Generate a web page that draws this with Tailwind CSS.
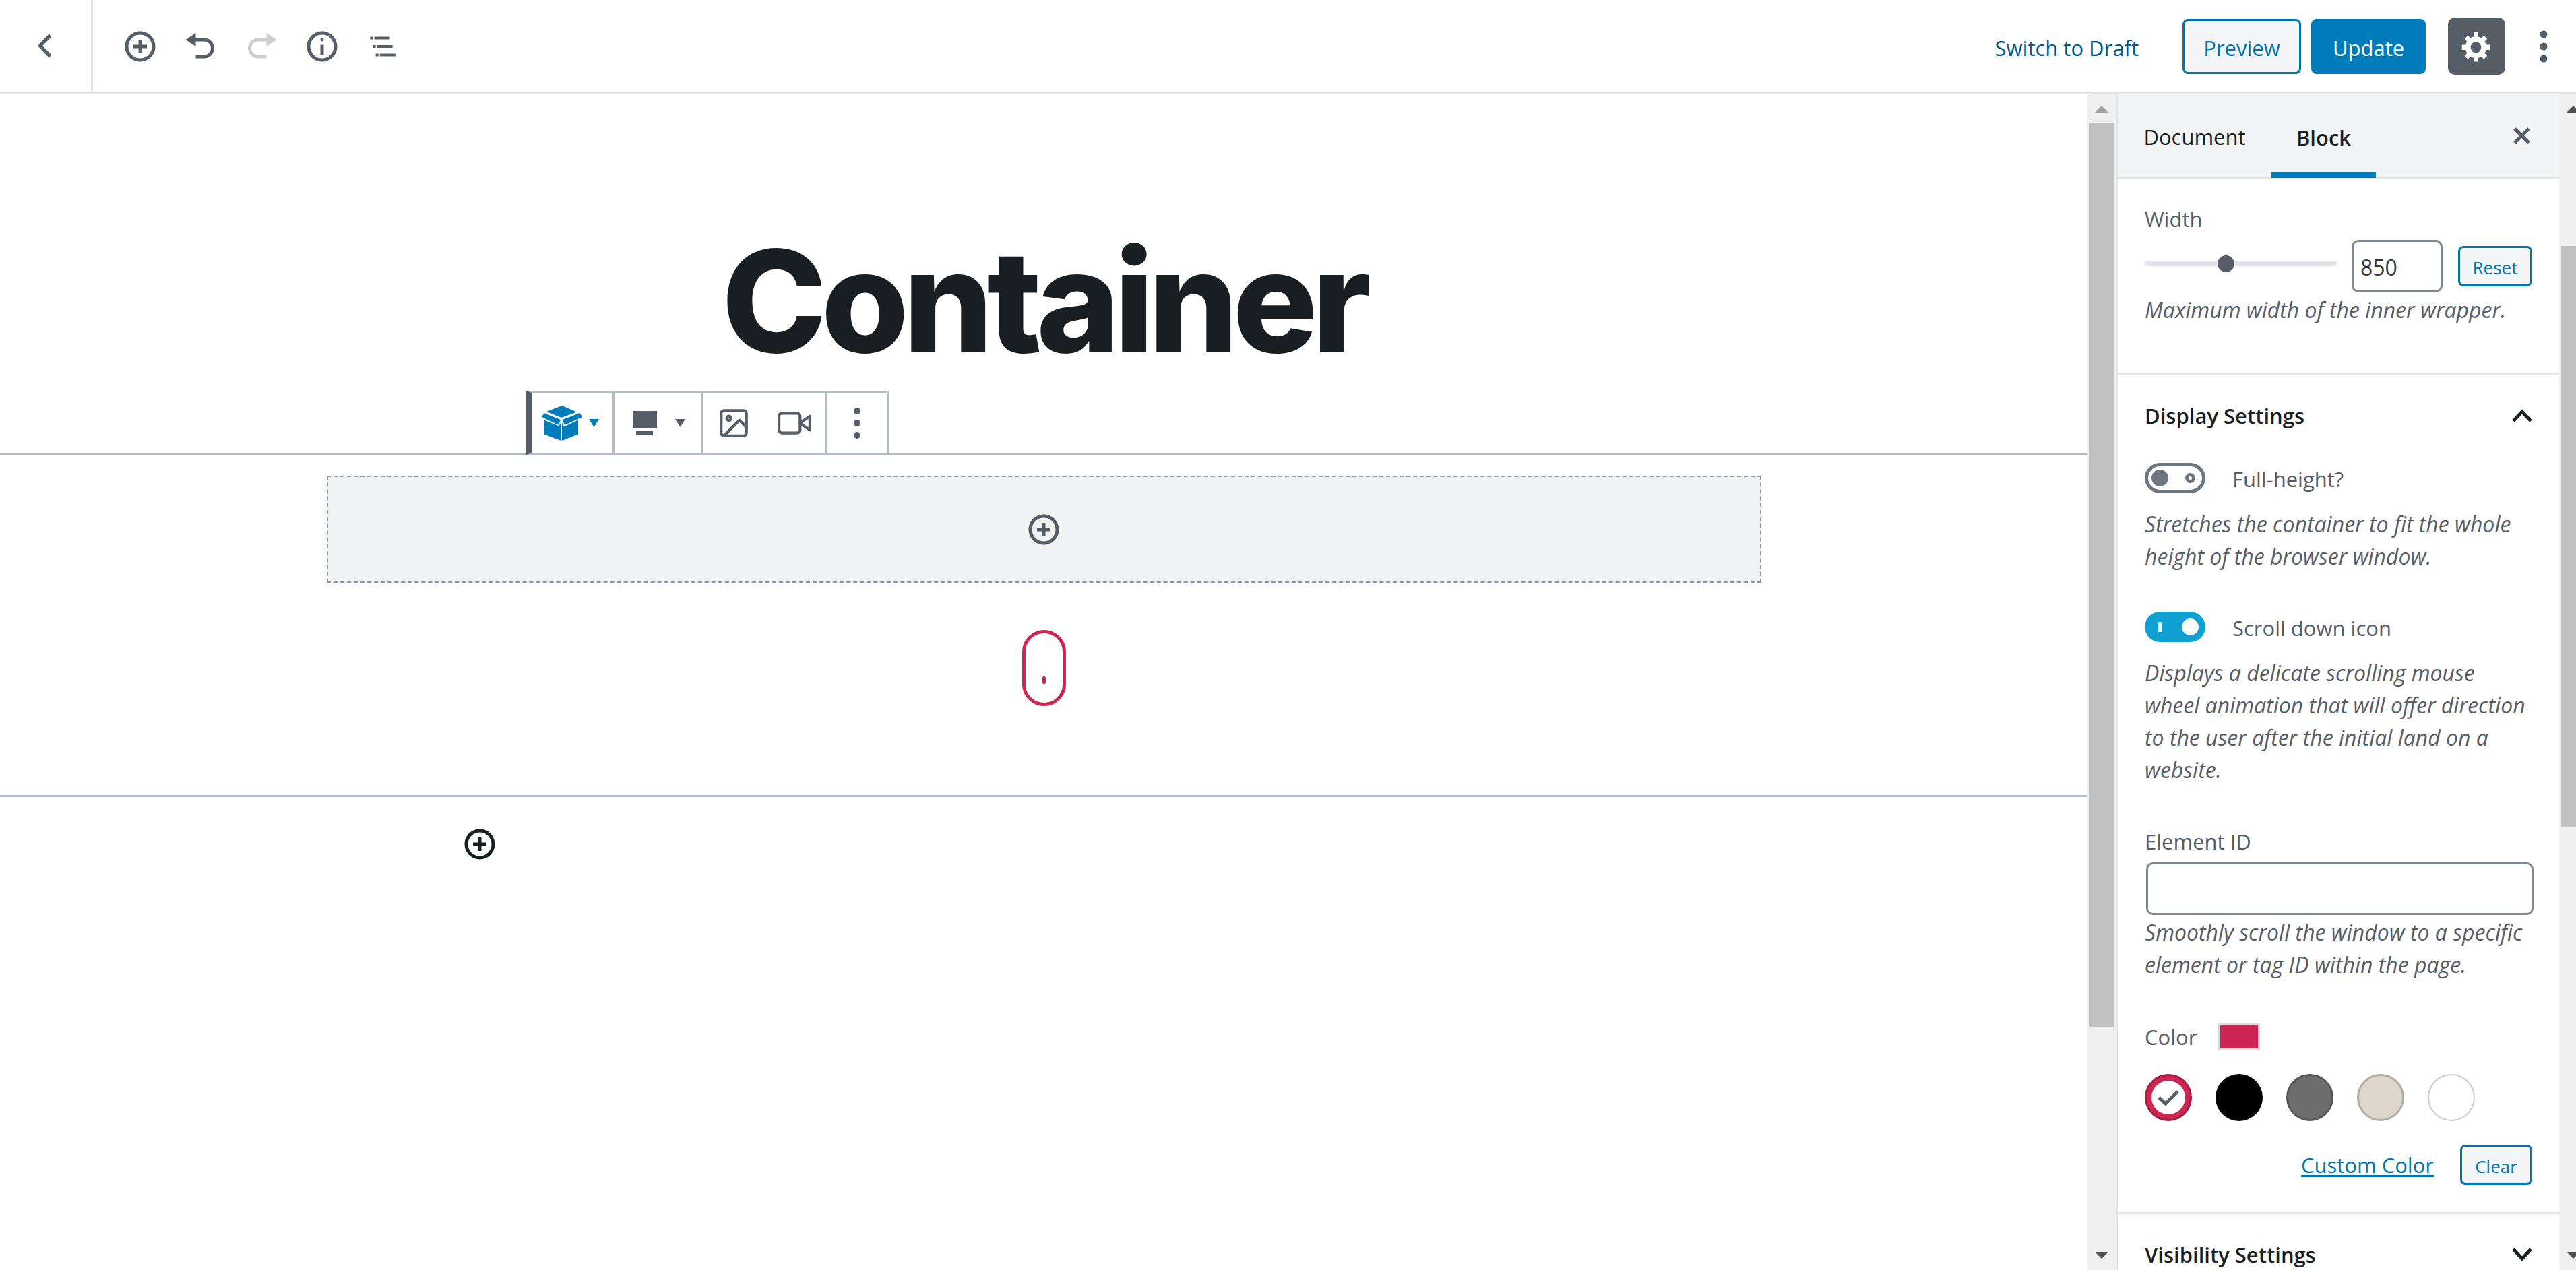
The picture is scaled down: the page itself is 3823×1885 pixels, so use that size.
<!DOCTYPE html>
<html lang="en">
<head>
<meta charset="utf-8">
<title>Edit Page</title>
<script src="https://cdn.jsdelivr.net/npm/@tailwindcss/browser@4"></script>
</head>
<body class="flex h-screen flex-col overflow-hidden bg-white font-['Open_Sans','Noto_Sans',sans-serif] text-[31px] leading-[48px] text-[#555d66]">

<header class="flex h-[140px] shrink-0 items-stretch justify-between border-b-3 border-[#e2e4e7]">
  <div class="flex">
    <a href="#" aria-label="Back" class="mb-[2px] flex w-[138px] items-center justify-center border-r-3 border-[#e2e4e7] pr-1 text-[#555d66]">
      <svg class="h-[36px] w-[20px]" viewBox="0 0 20 36" fill="currentColor"><path d="M17 0 20 5 7 18 20 31 17 36 0 18Z"/></svg>
    </a>
    <div class="flex items-center gap-10 pl-[45px]">
      <button type="button" aria-label="Add block"><svg class="size-[50px]" viewBox="0 0 20 20" fill="currentColor"><path d="M10 1c-5 0-9 4-9 9s4 9 9 9 9-4 9-9-4-9-9-9zm0 16c-3.900 0-7-3.100-7-7s3.100-7 7-7 7 3.100 7 7-3.100 7-7 7zm1-11H9v3H6v2h3v3h2v-3h3V9h-3V6z"/></svg></button>
      <button type="button" aria-label="Undo"><svg class="size-[50px]" viewBox="0 0 20 20" fill="currentColor"><path d="M12 5H7V2L1 6l6 4V7h5c2.200 0 4 1.800 4 4s-1.800 4-4 4H7v2h5c3.300 0 6-2.700 6-6s-2.700-6-6-6z"/></svg></button>
      <button type="button" aria-label="Redo" disabled class="text-[#ccced1]"><svg class="size-[50px]" viewBox="0 0 20 20" fill="currentColor"><path d="M8 5h5V2l6 4-6 4V7H8c-2.200 0-4 1.800-4 4s1.800 4 4 4h5v2H8c-3.300 0-6-2.700-6-6s2.700-6 6-6z"/></svg></button>
      <button type="button" aria-label="Content structure"><svg class="size-[50px]" viewBox="0 0 20 20" fill="currentColor"><path d="M9 15h2V9H9v6zm1-10c-.5 0-1 .5-1 1s.5 1 1 1 1-.5 1-1-.5-1-1-1zm0-4c-5 0-9 4-9 9s4 9 9 9 9-4 9-9-4-9-9-9zm0 16c-3.900 0-7-3.100-7-7s3.100-7 7-7 7 3.100 7 7-3.100 7-7 7z"/></svg></button>
      <button type="button" aria-label="Block navigation"><svg class="size-[50px]" viewBox="0 0 24 24" fill="currentColor"><path d="M5 5H3v2h2V5zm3 8h11v-2H8v2zm9-8H6v2h11V5zM7 11H5v2h2v-2zm0 8h2v-2H7v2zm3-2v2h11v-2H10z"/></svg></button>
    </div>
  </div>
  <div class="flex items-center pr-[23px]">
    <button type="button" class="mr-[65px] pt-1 text-[#00588a]">Switch to Draft</button>
    <button type="button" class="mr-[15px] h-[82px] w-[176px] rounded-[8px] border-3 border-[#0075af] bg-[#f3f5f6] pt-1 text-[#0075af]">Preview</button>
    <button type="button" class="mr-[33px] h-[82px] w-[170px] rounded-[8px] bg-[#007cba] pt-1 text-white">Update</button>
    <button type="button" aria-label="Settings" class="mr-[32px] flex size-[85px] items-center justify-center rounded-[10px] bg-[#555d66] pr-[2px] text-white"><svg class="size-[50px]" viewBox="0 0 20 20" fill="currentColor"><path d="M18 12h-2.200c-.2.700-.4 1.400-.8 2l1.500 1.500-2 2L13 16c-.6.400-1.300.600-2 .8V19H8.500v-2.200c-.7-.2-1.400-.4-2-.8L5 17.500l-2-2L4.500 14c-.4-.6-.6-1.300-.8-2H1.500V9h2.200c.2-.7.4-1.400.8-2L3 5.500l2-2L6.500 5c.6-.4 1.300-.6 2-.8V1.500H11v2.700c.7.200 1.400.400 2 .8l1.500-1.500 2 2L15 7c.4.600.6 1.300.8 2H18v3zm-8.200 1.700c1.700 0 3.100-1.400 3.100-3.200s-1.400-3.200-3.100-3.200-3.100 1.400-3.100 3.200 1.400 3.200 3.100 3.200z"/></svg></button>
    <button type="button" aria-label="More tools"><svg class="size-[50px]" viewBox="0 0 50 50" fill="currentColor"><circle cx="25" cy="7" r="5.500"/><circle cx="25" cy="25" r="5.500"/><circle cx="25" cy="43" r="5.500"/></svg></button>
  </div>
</header>

<div class="flex min-h-0 flex-1">
  <main class="min-w-0 flex-1 overflow-hidden">
    <h1 class="pt-[177px] pb-[3px] text-center font-['Inter',sans-serif] text-[210px] leading-[260px] font-extrabold tracking-[-0.04em] text-[#191e23]">Container</h1>

    <div class="relative mx-auto -mb-[2px] flex max-w-[1536px]">
      <div class="flex h-[95px] border-3 border-l-8 border-[#b5bcc2] border-l-[#555d66] bg-white">
        <button type="button" aria-label="Container block" class="flex w-[123px] items-center gap-[10px] border-r-3 border-[#b5bcc2] pl-[15px] text-[#007cba]">
          <svg class="h-[52px] w-[60px]" viewBox="0 0 60 52" fill="currentColor"><path d="M30 0 52 9.500 29 18 7 9Z"/><path d="M3.500 11 28 21 25 29 0 17Z"/><path d="M56.500 11 60 17 34 29 30.500 21Z"/><path d="M3.500 21.500 25.500 30.500 28.500 25V52L3.500 42.500Z"/><path d="M54 21.500 33 31.500 30 25V52L54 42.500Z"/></svg>
          <svg class="h-[12px] w-[15px]" viewBox="0 0 15 12" fill="currentColor"><path d="M0 0H15L7.500 12Z"/></svg>
        </button>
        <button type="button" aria-label="Change alignment" class="flex w-[132px] items-center gap-[27px] border-r-3 border-[#b5bcc2] pl-[27px]">
          <svg class="h-[36px] w-[36px]" viewBox="0 0 36 36" fill="currentColor"><path d="M0 0H36V26H0ZM5 30H30V36H5Z"/></svg>
          <svg class="h-[12px] w-[15px]" viewBox="0 0 15 12" fill="currentColor"><path d="M0 0H15L7.500 12Z"/></svg>
        </button>
        <div class="flex w-[183px] items-center gap-10 border-r-3 border-[#b5bcc2] pl-[20px]">
          <button type="button" aria-label="Background image"><svg class="size-[50px]" viewBox="0 0 24 24" fill="none" stroke="currentColor" stroke-width="2" stroke-linecap="round" stroke-linejoin="round"><rect x="3" y="3" width="18" height="18" rx="2"/><circle cx="8.500" cy="8.500" r="1.500"/><path d="M21 15l-5-5L5 21"/></svg></button>
          <button type="button" aria-label="Background video"><svg class="size-[50px]" viewBox="0 0 24 24" fill="none" stroke="currentColor" stroke-width="2" stroke-linecap="round" stroke-linejoin="round"><path d="M23 7l-7 5 7 5V7z"/><rect x="1" y="5" width="15" height="14" rx="2"/></svg></button>
        </div>
        <button type="button" aria-label="More options" class="flex w-[89px] items-center justify-center"><svg class="size-[50px]" viewBox="0 0 50 50" fill="currentColor"><circle cx="25" cy="7" r="5"/><circle cx="25" cy="25" r="5"/><circle cx="25" cy="43" r="5"/></svg></button>
      </div>
    </div>

    <section class="flex flex-col items-center border-y-3 border-[#b5bcc2] pt-[30px] pb-[132px]">
      <button type="button" aria-label="Add block inside container" class="flex h-[159px] w-full max-w-[2129px] items-center justify-center border-2 border-dashed border-[#8d96a0] bg-[#f0f2f4]"><svg class="size-[50px]" viewBox="0 0 20 20" fill="currentColor"><path d="M10 1c-5 0-9 4-9 9s4 9 9 9 9-4 9-9-4-9-9-9zm0 16c-3.900 0-7-3.100-7-7s3.100-7 7-7 7 3.100 7 7-3.100 7-7 7zm1-11H9v3H6v2h3v3h2v-3h3V9h-3V6z"/></svg></button>
      <div class="mt-[70px] flex h-[113px] w-[65px] items-end justify-center rounded-full border-5 border-[#cd2653] pb-[28px]"><span class="h-[11px] w-[5px] rounded-[2px] bg-[#cd2653]"></span></div>
    </section>

    <div class="mx-auto max-w-[1724px] pt-[45px]">
      <button type="button" aria-label="Add block" class="block text-[#191e23]"><svg class="size-[50px]" viewBox="0 0 20 20" fill="currentColor"><path d="M10 1c-5 0-9 4-9 9s4 9 9 9 9-4 9-9-4-9-9-9zm0 16c-3.900 0-7-3.100-7-7s3.100-7 7-7 7 3.100 7 7-3.100 7-7 7zm1-11H9v3H6v2h3v3h2v-3h3V9h-3V6z"/></svg></button>
    </div>
  </main>

  <div class="flex w-[42px] shrink-0 flex-col items-center bg-[#f0f0f0] pt-[17px] pb-[17px]">
    <svg class="h-[10px] w-[20px] text-[#a3a3a3]" viewBox="0 0 20 10" fill="currentColor"><path d="M0 10 10 0 20 10Z"/></svg>
    <div class="my-[15px] flex w-[38px] flex-1 flex-col"><div class="flex-[101] bg-[#c1c1c1]"></div><div class="flex-[24]"></div></div>
    <svg class="h-[10px] w-[20px] text-[#505050]" viewBox="0 0 20 10" fill="currentColor"><path d="M0 0 10 10 20 0Z"/></svg>
  </div>

  <aside class="flex w-[658px] shrink-0 flex-col overflow-hidden border-l-3 border-[#e2e4e7]">
    <div class="flex h-[125px] shrink-0 items-stretch border-b-3 border-[#e2e4e7] bg-[#f3f4f5] text-[#191e23]">
      <button type="button" class="w-[228px] pt-1">Document</button>
      <button type="button" class="-mb-[2px] w-[155px] border-b-8 border-[#007cba] pt-3 font-semibold">Block</button>
      <button type="button" aria-label="Close settings" class="ml-auto pr-[43px] text-[#555d66]"><svg class="size-[25px]" viewBox="0 0 25 25" fill="none" stroke="currentColor" stroke-width="5"><path d="M2 2 23 23M23 2 2 23"/></svg></button>
    </div>

    <section class="shrink-0 border-b-3 border-[#e2e4e7] px-10 pt-[36px] pb-[70px]">
      <label for="width" class="block">Width</label>
      <div class="mt-[7px] flex h-[78px] items-center">
        <input type="range" aria-label="Width slider" min="0" max="2055" value="850" class="-mt-[8px] mr-[22px] h-[25px] min-w-0 flex-1 appearance-none bg-transparent [&::-webkit-slider-runnable-track]:h-[8px] [&::-webkit-slider-runnable-track]:rounded-[4px] [&::-webkit-slider-runnable-track]:bg-[#e2e4e7] [&::-webkit-slider-thumb]:-mt-[8px] [&::-webkit-slider-thumb]:size-[25px] [&::-webkit-slider-thumb]:appearance-none [&::-webkit-slider-thumb]:rounded-full [&::-webkit-slider-thumb]:bg-[#555d66]">
        <input id="width" type="text" value="850" class="mr-[23px] h-[78px] w-[135px] rounded-[10px] border-3 border-[#7e8993] px-[10px] pt-[3px] text-[32px] font-medium text-[#32373c]">
        <button type="button" class="h-[60px] w-[110px] rounded-[8px] border-3 border-[#0075af] bg-[#f3f5f6] pt-1 text-[26px] leading-[48px] text-[#0075af]">Reset</button>
      </div>
      <p class="mt-[2px] text-[32px] leading-[48px] italic">Maximum width of the inner wrapper.</p>
    </section>

    <section class="shrink-0 border-b-3 border-[#e2e4e7] px-10 pt-[36px] pb-10">
      <button type="button" class="flex w-full items-center justify-between font-semibold text-[#191e23]">Display Settings <svg class="h-[20px] w-[30px]" viewBox="0 0 30 20" fill="none" stroke="currentColor" stroke-width="5"><path d="M2 18 15 4 28 18"/></svg></button>

      <div class="mt-[46px] flex">
        <input id="full-height" type="checkbox" class="sr-only">
        <label for="full-height" class="flex gap-10"><span class="flex h-[45px] w-[90px] items-center justify-between rounded-full border-5 border-[#6c7781] pr-[10px] pl-[5px]"><span class="size-[25px] rounded-full bg-[#6c7781]"></span><span class="size-[15px] rounded-full border-5 border-[#6c7781]"></span></span>Full-height?</label>
      </div>
      <p class="mt-[19px] text-[32px] leading-[48px] italic">Stretches the container to fit the whole height of the browser window.</p>

      <div class="mt-[58px] flex">
        <input id="scroll-icon" type="checkbox" checked class="sr-only">
        <label for="scroll-icon" class="flex gap-10"><span class="flex h-[45px] w-[90px] items-center justify-between rounded-full bg-[#11a0d2] pr-[10px] pl-[20px]"><span class="h-[15px] w-[5px] bg-white"></span><span class="size-[25px] rounded-full bg-white"></span></span>Scroll down icon</label>
      </div>
      <p class="mt-[19px] text-[32px] leading-[48px] italic">Displays a delicate scrolling mouse wheel animation that will offer direction to the user after the initial land on a website.</p>

      <label for="element-id" class="mt-[58px] block">Element ID</label>
      <input id="element-id" type="text" class="mt-[7px] ml-[2px] block h-[78px] w-full rounded-[10px] border-3 border-[#7e8993] px-[10px]">
      <p class="mt-[2px] text-[32px] leading-[48px] italic">Smoothly scroll the window to a specific element or tag ID within the page.</p>

      <div class="mt-[59px] flex items-center gap-[32px]">Color <span class="h-[40px] w-[62px] border-3 border-[#d9d9d9] bg-[#cd2653]"></span></div>
      <div class="mt-[31px] flex gap-[35px]">
        <button type="button" aria-label="Accent color" class="flex size-[70px] items-center justify-center rounded-full border-3 border-[#a41e42] bg-[#cd2653]"><span class="flex size-[50px] items-center justify-center rounded-full bg-white"><svg class="h-[24px] w-[32px]" viewBox="0 0 32 24" fill="none" stroke="currentColor" stroke-width="5"><path d="M2 12 12 21 30 3"/></svg></span></button>
        <button type="button" aria-label="Primary color" class="size-[70px] rounded-full bg-black"></button>
        <button type="button" aria-label="Secondary color" class="size-[70px] rounded-full border-3 border-[#575757] bg-[#6d6d6d]"></button>
        <button type="button" aria-label="Subtle background color" class="size-[70px] rounded-full border-3 border-[#b0aca2] bg-[#dcd7ca]"></button>
        <button type="button" aria-label="Background color" class="size-[70px] rounded-full border-2 border-[#cccccc] bg-white"></button>
      </div>
      <div class="mt-[35px] flex items-center justify-end gap-[39px]">
        <a href="#" class="text-[#0075af] underline decoration-3 underline-offset-3">Custom Color</a>
        <button type="button" class="h-[60px] w-[107px] rounded-[8px] border-3 border-[#0075af] bg-[#f3f5f6] pt-1 text-[26px] leading-[48px] text-[#0075af]">Clear</button>
      </div>
    </section>

    <section class="shrink-0 px-10 pt-[36px]">
      <button type="button" class="flex w-full items-center justify-between font-semibold text-[#191e23]">Visibility Settings <svg class="h-[20px] w-[30px]" viewBox="0 0 30 20" fill="none" stroke="currentColor" stroke-width="5"><path d="M2 2 15 16 28 2"/></svg></button>
    </section>
  </aside>

  <div class="w-[25px] shrink-0 overflow-hidden">
    <div class="flex h-full w-[42px] flex-col items-center bg-[#f0f0f0] pt-[17px] pb-[17px]">
      <svg class="h-[10px] w-[20px] text-[#505050]" viewBox="0 0 20 10" fill="currentColor"><path d="M0 10 10 0 20 10Z"/></svg>
      <div class="my-[15px] flex w-[38px] flex-1 flex-col"><div class="flex-[11]"></div><div class="flex-[52] bg-[#c1c1c1]"></div><div class="flex-[37]"></div></div>
      <svg class="h-[10px] w-[20px] text-[#505050]" viewBox="0 0 20 10" fill="currentColor"><path d="M0 0 10 10 20 0Z"/></svg>
    </div>
  </div>
</div>
</body>
</html>
